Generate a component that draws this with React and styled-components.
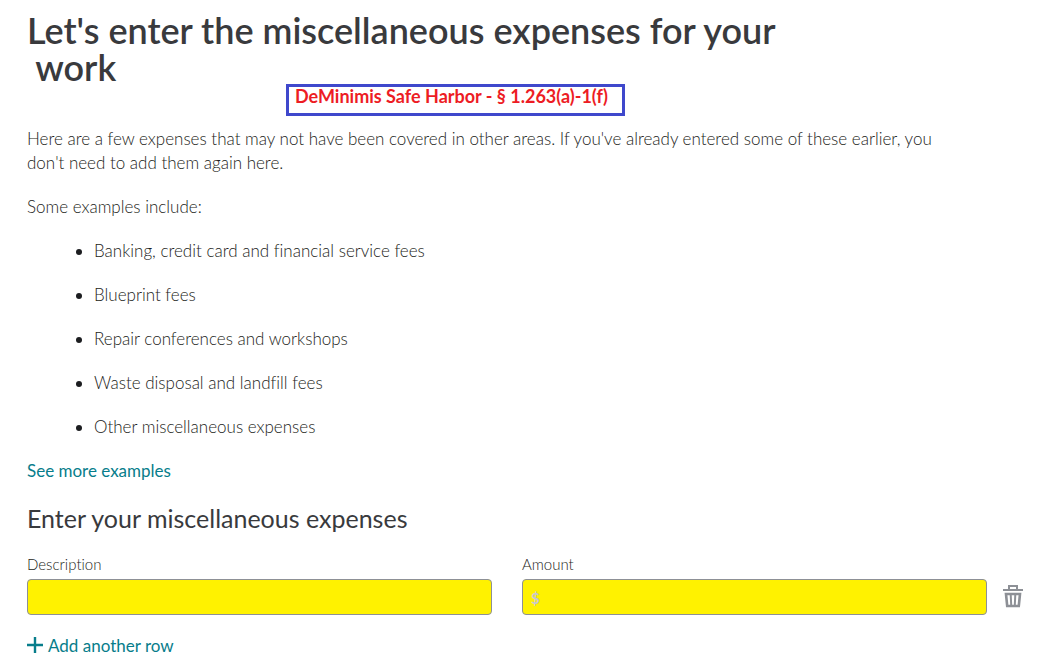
import React, { useState } from "react";
import styled, { createGlobalStyle } from "styled-components";

const examples = [
    "Banking, credit card and financial service fees",
    "Blueprint fees",
    "Repair conferences and workshops",
    "Waste disposal and landfill fees",
    "Other miscellaneous expenses",
];

//one row of the expense form
function ExpenseRow(props) {
    const {id, remove} = props
    return (
        <StyledRow>
            <Field>
                <Label htmlFor={`description-${id}`}>Description</Label>
                <Input id={`description-${id}`} type="text" />
            </Field>
            <Field>
                <Label htmlFor={`amount-${id}`}>Amount</Label>
                <Input id={`amount-${id}`} type="text" placeholder="$" />
            </Field>
            <TrashButton type="button" aria-label="Delete row" onClick={() => remove(id)}>
                <svg width="20" height="24" viewBox="0 0 20 24" fill="none" stroke="#8d9096">
                    <path d="M6 4V1H14V4" strokeWidth="2" />
                    <path d="M0 5H20" strokeWidth="2" />
                    <path d="M3 9L4.2 21H15.8L17 9Z" strokeWidth="2.6" />
                    <path d="M7.7 9.5L8.2 20M12.3 9.5L11.8 20" strokeWidth="2" />
                </svg>
            </TrashButton>
        </StyledRow>
    )
}

export default function App() {
    const [rows, setRows] = useState([1])
    const addRow = () => setRows([...rows, Math.max(0, ...rows) + 1])
    const remove = id => setRows(rows.filter(row => row !== id))

    return (
        <Page>
            <GlobalStyle />
            <Header>
                <Title>Let's enter the miscellaneous expenses for your &nbsp;work</Title>
                <Callout>DeMinimis Safe Harbor - § 1.263(a)-1(f)</Callout>
            </Header>
            <Text>
                Here are a few expenses that may not have been covered in other areas. If you've already
                entered some of these earlier, you don't need to add them again here.
            </Text>
            <Text>Some examples include:</Text>
            <List>
                {examples.map(item => <li key={item}>{item}</li>)}
            </List>
            <MoreLink href="#examples">See more examples</MoreLink>
            <Subtitle>Enter your miscellaneous expenses</Subtitle>
            <form>
                {rows.map(id => <ExpenseRow key={id} id={id} remove={remove} />)}
                <AddButton type="button" onClick={addRow}>
                    <svg width="16" height="16" viewBox="0 0 16 16" stroke="#077d8b" strokeWidth="2.4">
                        <path d="M0 7H16M8 -1V15" />
                    </svg>
                    Add another row
                </AddButton>
            </form>
        </Page>
    )
}

const GlobalStyle = createGlobalStyle`
    * {
        box-sizing: border-box;
    }
    body {
        margin: 0;
        background: #fff;
        color: #1c1d20;
        font-family: Lato, "Open Sans", sans-serif;
        font-size: 17px;
        line-height: 24px;
        font-weight: 300;
        font-variant-ligatures: none;
    }
`;

const Page = styled.main`
    padding: 12px 25px 0 27px;
`;

const Header = styled.header`
    position: relative;
    margin-bottom: 41px;
`;

const Title = styled.h1`
    max-width: 780px;
    margin: 0;
    color: #393a3d;
    font-size: 36px;
    line-height: 37px;
    font-weight: 600;
`;

//note laid over the page, under the title
const Callout = styled.div`
    position: absolute;
    top: 72px;
    left: 259px;
    width: 339px;
    height: 32px;
    padding: 0 6px;
    border: 3px solid #3f48cc;
    color: #ed1c24;
    font-size: 18px;
    line-height: 18px;
    font-weight: 700;
    white-space: nowrap;
`;

const Text = styled.p`
    max-width: 920px;
    margin: 0 0 20px;
`;

const List = styled.ul`
    margin: 0 0 20px;
    padding-left: 67px;

    li + li {
        margin-top: 20px;
    }
`;

const MoreLink = styled.a`
    color: #077d8b;
    font-weight: 400;
    text-decoration: none;
`;

const Subtitle = styled.h2`
    margin: 19px 0 20px;
    color: #393a3d;
    font-size: 25px;
    line-height: 32px;
    font-weight: 400;
`;

const StyledRow = styled.div`
    display: flex;
    align-items: flex-end;
    margin-bottom: 19px;
`;

const Field = styled.div`
    flex: 1;

    & + & {
        margin-left: 30px;
    }
`;

const Label = styled.label`
    display: block;
    margin-bottom: 5px;
    font-size: 15px;
    line-height: 20px;
`;

const Input = styled.input`
    display: block;
    width: 100%;
    height: 36px;
    padding: 0 8px;
    border: 1px solid #8d9096;
    border-radius: 4px;
    background: #fff200;
    color: #393a3d;
    font: inherit;

    &::placeholder {
        color: #c8c8d0;
        font-size: 15px;
        font-weight: 700;
        opacity: 1;
    }
`;

const TrashButton = styled.button`
    display: flex;
    align-items: center;
    height: 36px;
    margin-left: 16px;
    padding: 0;
    border: 0;
    background: none;
    cursor: pointer;
`;

const AddButton = styled.button`
    display: flex;
    align-items: center;
    gap: 5px;
    padding: 0;
    border: 0;
    background: none;
    color: #077d8b;
    font: inherit;
    font-weight: 400;
    cursor: pointer;

    svg {
        overflow: visible;
    }
`;
